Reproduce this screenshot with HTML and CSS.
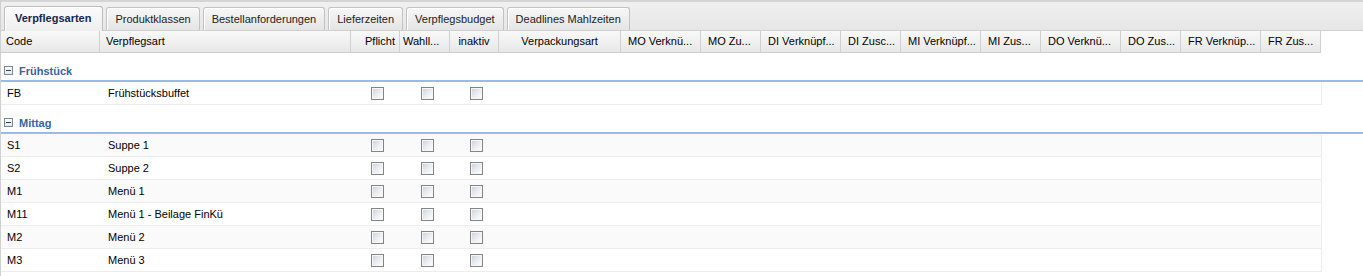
FILE: index.html
```html
<!DOCTYPE html>
<html lang="de">
<head>
  <meta charset="UTF-8" />
  <title>Verpflegsarten</title>
  <link rel="stylesheet" href="styles.css">
</head>
<body>
  <div class="panel">
    <div class="tabbar">
      <div class="tab active">Verpflegsarten</div>
      <div class="tab">Produktklassen</div>
      <div class="tab">Bestellanforderungen</div>
      <div class="tab">Lieferzeiten</div>
      <div class="tab">Verpflegsbudget</div>
      <div class="tab">Deadlines Mahlzeiten</div>
    </div>

    <div class="grid">
      <div class="grid-head">
        <div class="hd c-code">Code</div>
        <div class="hd c-name">Verpflegsart</div>
        <div class="hd c-chk1 right">Pflicht</div>
        <div class="hd c-chk2">Wahll...</div>
        <div class="hd c-chk3 center">inaktiv</div>
        <div class="hd c-pack center">Verpackungsart</div>
        <div class="hd c-link">MO Verknü...</div>
        <div class="hd c-add">MO Zu...</div>
        <div class="hd c-link">DI Verknüpf...</div>
        <div class="hd c-add">DI Zusc...</div>
        <div class="hd c-link">MI Verknüpf...</div>
        <div class="hd c-add">MI Zus...</div>
        <div class="hd c-link">DO Verknü...</div>
        <div class="hd c-add">DO Zus...</div>
        <div class="hd c-link">FR Verknüp...</div>
        <div class="hd c-add">FR Zus...</div>
      </div>

      <div class="group">
        <div class="group-hd"><span class="toggle"></span>Frühstück</div>
        <div class="row">
          <div class="cell c-code">FB</div>
          <div class="cell c-name">Frühstücksbuffet</div>
          <div class="cell c-chk1 box"><span class="chk"></span></div>
          <div class="cell c-chk2 box"><span class="chk"></span></div>
          <div class="cell c-chk3 box"><span class="chk"></span></div>
        </div>
      </div>

      <div class="group">
        <div class="group-hd"><span class="toggle"></span>Mittag</div>
        <div class="row alt">
          <div class="cell c-code">S1</div>
          <div class="cell c-name">Suppe 1</div>
          <div class="cell c-chk1 box"><span class="chk"></span></div>
          <div class="cell c-chk2 box"><span class="chk"></span></div>
          <div class="cell c-chk3 box"><span class="chk"></span></div>
        </div>
        <div class="row">
          <div class="cell c-code">S2</div>
          <div class="cell c-name">Suppe 2</div>
          <div class="cell c-chk1 box"><span class="chk"></span></div>
          <div class="cell c-chk2 box"><span class="chk"></span></div>
          <div class="cell c-chk3 box"><span class="chk"></span></div>
        </div>
        <div class="row alt">
          <div class="cell c-code">M1</div>
          <div class="cell c-name">Menü 1</div>
          <div class="cell c-chk1 box"><span class="chk"></span></div>
          <div class="cell c-chk2 box"><span class="chk"></span></div>
          <div class="cell c-chk3 box"><span class="chk"></span></div>
        </div>
        <div class="row">
          <div class="cell c-code">M11</div>
          <div class="cell c-name">Menü 1 - Beilage FinKü</div>
          <div class="cell c-chk1 box"><span class="chk"></span></div>
          <div class="cell c-chk2 box"><span class="chk"></span></div>
          <div class="cell c-chk3 box"><span class="chk"></span></div>
        </div>
        <div class="row alt">
          <div class="cell c-code">M2</div>
          <div class="cell c-name">Menü 2</div>
          <div class="cell c-chk1 box"><span class="chk"></span></div>
          <div class="cell c-chk2 box"><span class="chk"></span></div>
          <div class="cell c-chk3 box"><span class="chk"></span></div>
        </div>
        <div class="row">
          <div class="cell c-code">M3</div>
          <div class="cell c-name">Menü 3</div>
          <div class="cell c-chk1 box"><span class="chk"></span></div>
          <div class="cell c-chk2 box"><span class="chk"></span></div>
          <div class="cell c-chk3 box"><span class="chk"></span></div>
        </div>
      </div>
    </div>
  </div>
</body>
</html>
```

FILE: styles.css
```css
html, body {
  margin: 0;
  padding: 0;
  background: #fff;
}

body {
  font-family: "Liberation Sans", Arial, sans-serif;
  font-size: 11px;
  color: #000;
}

.panel {
  border-left: 1px solid #d0d0d0;
  height: 276px;
  overflow: hidden;
}

/* tab strip */
.tabbar {
  display: flex;
  align-items: flex-end;
  height: 28px;
  padding: 0 0 0 3px;
  border-top: 2px solid #d4d4d4;
  border-bottom: 1px solid #d0d0d0;
  background: linear-gradient(#f0f0f0, #e6e6e6);
}

.tab {
  height: 22px;
  line-height: 22px;
  padding: 0 8px;
  margin-right: 3px;
  border: 1px solid #c2c2c2;
  border-bottom: none;
  border-radius: 3px 3px 0 0;
  background: linear-gradient(#f7f7f7, #e4e4e4);
  box-shadow: inset 1px 1px 0 #fff;
  color: #222;
}

.tab.active {
  height: 24px;
  line-height: 23px;
  padding: 0 11px 0 10px;
  margin-bottom: -1px;
  font-weight: bold;
  color: #15284b;
  background: linear-gradient(#fbfbfb, #eeeeee);
  border-color: #bdbdbd;
}

/* grid */
.grid-head {
  display: flex;
  width: 1320px;
  height: 21px;
  border-bottom: 1px solid #cdcdcd;
  background: linear-gradient(#f9f9f9, #e7e7e7);
}

.hd {
  box-sizing: border-box;
  line-height: 21px;
  padding: 0 5px;
  border-right: 1px solid #d0d0d0;
  white-space: nowrap;
  overflow: hidden;
}

.hd.right { text-align: right; padding-right: 4px; }
.hd.center { text-align: center; }

.c-code { width: 99px; }
.c-name { width: 251px; }
.c-chk1 { width: 49px; }
.c-chk2 { width: 50px; }
.c-chk3 { width: 49px; }
.c-pack { width: 122px; }
.c-link { width: 80px; }
.c-add { width: 60px; }

.hd.c-code { padding-left: 5px; }
.hd.c-name { padding-left: 6px; }
.hd.c-chk2 { padding-left: 3px; }
.hd.c-link, .hd.c-add { padding-left: 7px; }

.group-hd {
  display: flex;
  align-items: center;
  height: 13px;
  padding: 11px 0 3px 3px;
  border-bottom: 2px solid #99bbe8;
  color: #3764a0;
  font-weight: bold;
}

.toggle {
  position: relative;
  width: 9px;
  height: 9px;
  box-sizing: border-box;
  margin-right: 6px;
  border: 1px solid #7b8798;
  background: linear-gradient(#ffffff, #e3e7ed);
}

.toggle::after {
  content: "";
  position: absolute;
  left: 1px;
  top: 3px;
  width: 5px;
  height: 1px;
  background: #34445a;
}

.row {
  display: flex;
  width: 1320px;
  height: 22px;
  border-bottom: 1px solid #ededed;
  border-right: 1px solid #ededed;
  background: #fff;
}

.row.alt { background: #fafafa; }

.cell {
  box-sizing: border-box;
  line-height: 22px;
  white-space: nowrap;
  overflow: hidden;
}

.cell.c-code { padding-left: 6px; }
.cell.c-name { padding-left: 8px; }

.cell.box {
  display: flex;
  align-items: center;
  justify-content: center;
  padding-left: 4px;
}

.chk {
  display: block;
  width: 13px;
  height: 13px;
  box-sizing: border-box;
  border: 1px solid #848484;
  background: linear-gradient(135deg, #c9d0da 0%, #e9ecf0 50%, #ffffff 100%);
  box-shadow: inset 0 0 0 1px #f6f7f9;
}
```
